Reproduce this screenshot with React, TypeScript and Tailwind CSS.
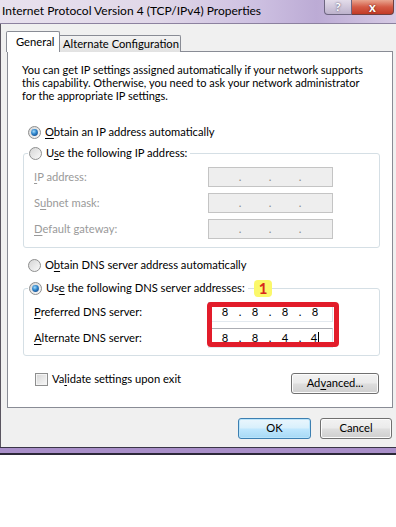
import React from "react";

function Radio({ checked }: { checked?: boolean }) {
  return (
    <svg width="13" height="13" viewBox="0 0 13 13" className="shrink-0">
      <defs>
        <linearGradient id="rg" x1="0" y1="0" x2="1" y2="1">
          <stop offset="0" stopColor="#d4d4d4" />
          <stop offset="1" stopColor="#fbfbfb" />
        </linearGradient>
        <radialGradient id="rb" cx="0.4" cy="0.35" r="0.75">
          <stop offset="0" stopColor="#a6dcfb" />
          <stop offset="0.5" stopColor="#2f86cc" />
          <stop offset="1" stopColor="#16498a" />
        </radialGradient>
      </defs>
      <circle cx="6.5" cy="6.5" r="6" fill="url(#rg)" stroke="#8e8f8f" />
      {checked && <circle cx="6.5" cy="6.5" r="3.4" fill="url(#rb)" />}
    </svg>
  );
}

function IpBox({ values, disabled, cursor }: { values?: string[]; disabled?: boolean; cursor?: boolean }) {
  const v = values ?? ["", "", "", ""];
  const box = disabled
    ? "bg-[#eeeeee] border border-[#c4c4c4]"
    : "bg-white border border-[#dbdfe6] border-t-[#abadb3] border-b-[#e3e9ef]";
  const dot = disabled ? "text-[#8a8a8a]" : "text-black";
  return (
    <div className={`w-[125px] h-[20px] flex items-center pl-[3px] ${box}`}>
      {v.map((d, i) => (
        <React.Fragment key={i}>
          <div className="w-[26px] text-center leading-[18px] text-black">
            {d}
            {cursor && i === 3 && <span className="inline-block w-px h-[12px] bg-black align-[-2px] ml-[1px]" />}
          </div>
          {i < 3 && <div className={`w-[4px] text-center leading-[18px] ${dot}`}>.</div>}
        </React.Fragment>
      ))}
    </div>
  );
}

function Field({ label, disabled, values, cursor }: { label: React.ReactNode; disabled?: boolean; values?: string[]; cursor?: boolean }) {
  return (
    <div className="flex items-center h-[20px]">
      <div className={`w-[174px] whitespace-nowrap ${disabled ? "text-[#9a9a9a]" : "text-black"}`}>{label}</div>
      <IpBox disabled={disabled} values={values} cursor={cursor} />
    </div>
  );
}

function Btn({ children, w, primary }: { children: React.ReactNode; w: string; primary?: boolean }) {
  const cls = primary
    ? "border-[#3c7fb1] bg-[linear-gradient(to_bottom,#eaf6fd_0%,#d9f0fc_45%,#bee6fd_55%,#a7d9f5_100%)] shadow-[inset_0_0_0_1px_#b9e4fb]"
    : "border-[#707070] bg-[linear-gradient(to_bottom,#f2f2f2_0%,#ebebeb_45%,#dddddd_55%,#cfcfcf_100%)] shadow-[inset_0_0_0_1px_#fcfcfc]";
  return (
    <div className={`${w} h-[21px] border rounded-[3px] flex items-center justify-center text-black whitespace-nowrap ${cls}`}>
      {children}
    </div>
  );
}

export default function App() {
  return (
    <div className="w-[396px] h-[527px] bg-white overflow-hidden font-['Lato','Noto_Sans',sans-serif] text-[11.2px] text-black">
      {/* title bar */}
      <div className="h-[24px] flex items-start justify-between bg-[linear-gradient(to_right,#e8e1ee_0%,#e0d7e8_40%,#cdc0e1_65%,#bcabd5_80%,#d6cae4_100%)] border-b border-[#8c819f]">
        <div className="pl-[2px] pt-[3px] text-[12px] leading-[16px] text-black whitespace-nowrap">
          Internet Protocol Version 4 (TCP/IPv4) Properties
        </div>
        <div className="flex mr-[2px]">
          <div className="w-[28px] h-[15px] rounded-bl-[4px] border border-t-0 border-[#6d6580] bg-[linear-gradient(to_bottom,#e3dcea,#bdb2cc)] flex items-center justify-center text-white font-bold text-[12px] leading-none [text-shadow:0_0_2px_#3a3550]">
            ?
          </div>
          <div className="w-[42px] h-[15px] rounded-br-[4px] border border-t-0 border-l-0 border-[#6d4040] bg-[linear-gradient(to_bottom,#e9a590,#d45a45_50%,#c23a26)] flex items-center justify-center text-white font-bold text-[13px] leading-none [text-shadow:0_0_2px_#5a1a10]">
            x
          </div>
        </div>
      </div>

      {/* body */}
      <div className="h-[423px] bg-[#f0f0f0] border-l border-[#5a5560] flex flex-col">
        {/* tabs */}
        <div className="flex items-end ml-[5px] mt-[8px] h-[20px] relative z-10 whitespace-nowrap">
          <div className="w-[54px] h-[21px] bg-white border border-b-0 border-[#898c95] rounded-t-[2px] pl-[9px] pt-[2px] leading-[16px]">
            General
          </div>
          <div className="w-[121px] h-[17px] border border-l-0 border-b-0 border-[#898c95] rounded-tr-[2px] bg-[linear-gradient(to_bottom,#f3f3f3,#e2e2e2)] pl-[3px] leading-[16px]">
            Alternate Configuration
          </div>
        </div>
        {/* panel */}
        <div className="ml-[6px] -mt-px w-[386px] h-[357px] bg-white border border-[#898c95] flex flex-col">
          <p className="pl-[14px] pt-[11px] leading-[13px] whitespace-nowrap text-[11px]">
            You can get IP settings assigned automatically if your network supports
            <br />
            this capability. Otherwise, you need to ask your network administrator
            <br />
            for the appropriate IP settings.
          </p>

          <div className="flex items-center gap-[4px] h-[16px] ml-[20px] mt-[22px] whitespace-nowrap">
            <Radio checked />
            <span>
              <u className="underline-offset-2">O</u>btain an IP address automatically
            </span>
          </div>

          {/* groupbox 1 */}
          <div className="ml-[15px] mt-[13px] w-[357px] border border-[#d5dfe5] rounded-[3px] pl-[10px] pb-[8px] flex flex-col">
            <div className="-mt-[9px] -ml-[6px] w-fit h-[16px] bg-white px-[1px] flex items-center gap-[4px] whitespace-nowrap">
              <Radio />
              <span className="pr-[2px]">
                U<u className="underline-offset-2">s</u>e the following IP address:
              </span>
            </div>
            <div className="flex flex-col gap-[6px] mt-[6px]">
              <Field disabled label={<span><u className="underline-offset-2">I</u>P address:</span>} />
              <Field disabled label={<span>S<u className="underline-offset-2">u</u>bnet mask:</span>} />
              <Field disabled label={<span><u className="underline-offset-2">D</u>efault gateway:</span>} />
            </div>
          </div>

          <div className="flex items-center gap-[4px] h-[16px] ml-[20px] mt-[9px] whitespace-nowrap">
            <Radio />
            <span>
              O<u className="underline-offset-2">b</u>tain DNS server address automatically
            </span>
          </div>

          {/* groupbox 2 */}
          <div className="relative ml-[15px] mt-[15px] w-[357px] border border-[#d5dfe5] rounded-[3px] pl-[10px] pb-[7px] flex flex-col">
            <div className="-mt-[9px] -ml-[6px] w-fit h-[16px] bg-white px-[1px] flex items-center gap-[4px] whitespace-nowrap">
              <Radio checked />
              <span className="pr-[2px]">
                Us<u className="underline-offset-2">e</u> the following DNS server addresses:
              </span>
            </div>
            <div className="flex flex-col gap-[6px] mt-[6px]">
              <Field values={["8", "8", "8", "8"]} label={<span><u className="underline-offset-2">P</u>referred DNS server:</span>} />
              <Field cursor values={["8", "8", "4", "4"]} label={<span><u className="underline-offset-2">A</u>lternate DNS server:</span>} />
            </div>
            {/* annotation overlays */}
            <div className="absolute left-[183px] top-[13px] w-[132px] h-[45px] border-[5px] border-[#e21c2a] rounded-[4px]" />
            <div className="absolute left-[230px] -top-[9px] w-[18px] h-[17px] rounded-[4px] bg-[#fbf86a] flex items-center justify-center text-[#d8261c] font-bold text-[15px] leading-none">
              1
            </div>
          </div>

          <div className="flex items-start justify-between ml-[27px] mr-[13px] mt-[15px]">
            <div className="flex items-center gap-[4px] h-[16px] whitespace-nowrap">
              <div className="w-[13px] h-[13px] border border-[#8e8f8f] bg-[linear-gradient(135deg,#d6d6d6,#f8f8f8)] shadow-[inset_0_0_0_1px_#f4f4f4]" />
              <span>
                Va<u className="underline-offset-2">l</u>idate settings upon exit
              </span>
            </div>
            <div className="mt-[2px]">
              <Btn w="w-[88px]">
                Ad<u className="underline-offset-2">v</u>anced...
              </Btn>
            </div>
          </div>
        </div>

        <div className="flex justify-end gap-[9px] pr-[4px] mt-[10px]">
          <Btn w="w-[73px]" primary>
            OK
          </Btn>
          <Btn w="w-[72px]">Cancel</Btn>
        </div>
      </div>
      <div className="h-px bg-[#3a3548]" />
      <div className="h-[5px] bg-[#a98fc9]" />
      <div className="h-[2px] bg-[#2c2838]" />
    </div>
  );
}
